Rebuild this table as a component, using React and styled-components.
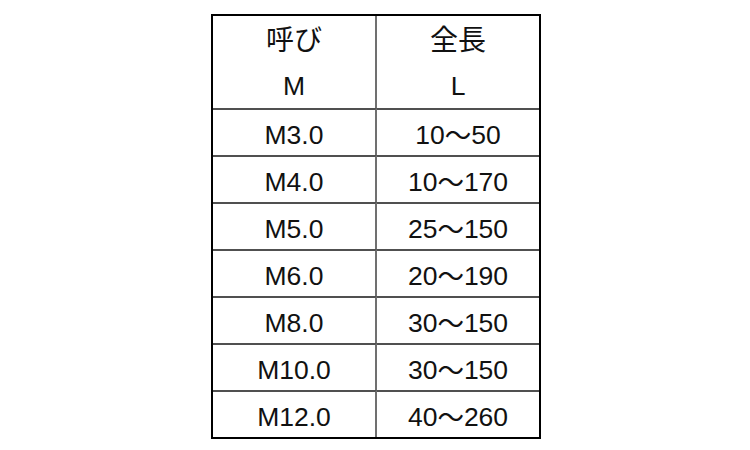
import * as React from "react";
import styled, { createGlobalStyle } from "styled-components";

const rows = [
  ["M3.0", "10", "50"],
  ["M4.0", "10", "170"],
  ["M5.0", "25", "150"],
  ["M6.0", "20", "190"],
  ["M8.0", "30", "150"],
  ["M10.0", "30", "150"],
  ["M12.0", "40", "260"],
];

export default function App() {
  return (
    <>
      <GlobalStyle />
      <Page>
        <Table>
          <HeadCell>
            <HeadTitle>呼び</HeadTitle>
            <HeadSymbol>M</HeadSymbol>
          </HeadCell>
          <HeadCell $last>
            <HeadTitle>全長</HeadTitle>
            <HeadSymbol>L</HeadSymbol>
          </HeadCell>
          {rows.map(([size, min, max]) => (
            <React.Fragment key={size}>
              <Cell>{size}</Cell>
              <Cell $last>
                {min}
                <Wave>～</Wave>
                {max}
              </Cell>
            </React.Fragment>
          ))}
        </Table>
      </Page>
    </>
  );
}

const GlobalStyle = createGlobalStyle`
  body {
    margin: 0;
    background: white;
    font-family: "Liberation Sans", "Noto Sans CJK JP", sans-serif;
  }
`;

const Page = styled.div`
  width: 750px;
  height: 450px;
  display: flex;
  justify-content: center;
  align-items: flex-start;
  padding-top: 14px;
  padding-left: 2px;
  box-sizing: border-box;
`;

const Table = styled.div`
  width: 330px;
  height: 425px;
  box-sizing: border-box;
  border: 2px solid #000;
  display: grid;
  grid-template-columns: 164px 1fr;
  grid-template-rows: 92px repeat(7, 1fr);
`;

const HeadCell = styled.div`
  display: grid;
  grid-template-rows: 1fr 1fr;
  align-items: center;
  justify-items: center;
  border-right: ${(p) => (p.$last ? "none" : "2px solid #707070")};
`;

const HeadTitle = styled.div`
  font-family: "Noto Sans CJK JP", sans-serif;
  font-size: 28px;
  line-height: 28px;
  color: #111;
  padding-bottom: 2px;
`;

const HeadSymbol = styled.div`
  font-size: 26.5px;
  line-height: 26px;
  color: #111;
  padding-top: 2px;
`;

const Cell = styled.div`
  display: flex;
  align-items: center;
  justify-content: center;
  border-top: 2px solid #505050;
  border-right: ${(p) => (p.$last ? "none" : "2px solid #707070")};
  font-size: 26.5px;
  line-height: 26px;
  color: #111;
  padding-top: 4px;
`;

const Wave = styled.span`
  font-family: "Noto Sans CJK JP", sans-serif;
  line-height: 26px;
  position: relative;
  top: -1px;
`;
